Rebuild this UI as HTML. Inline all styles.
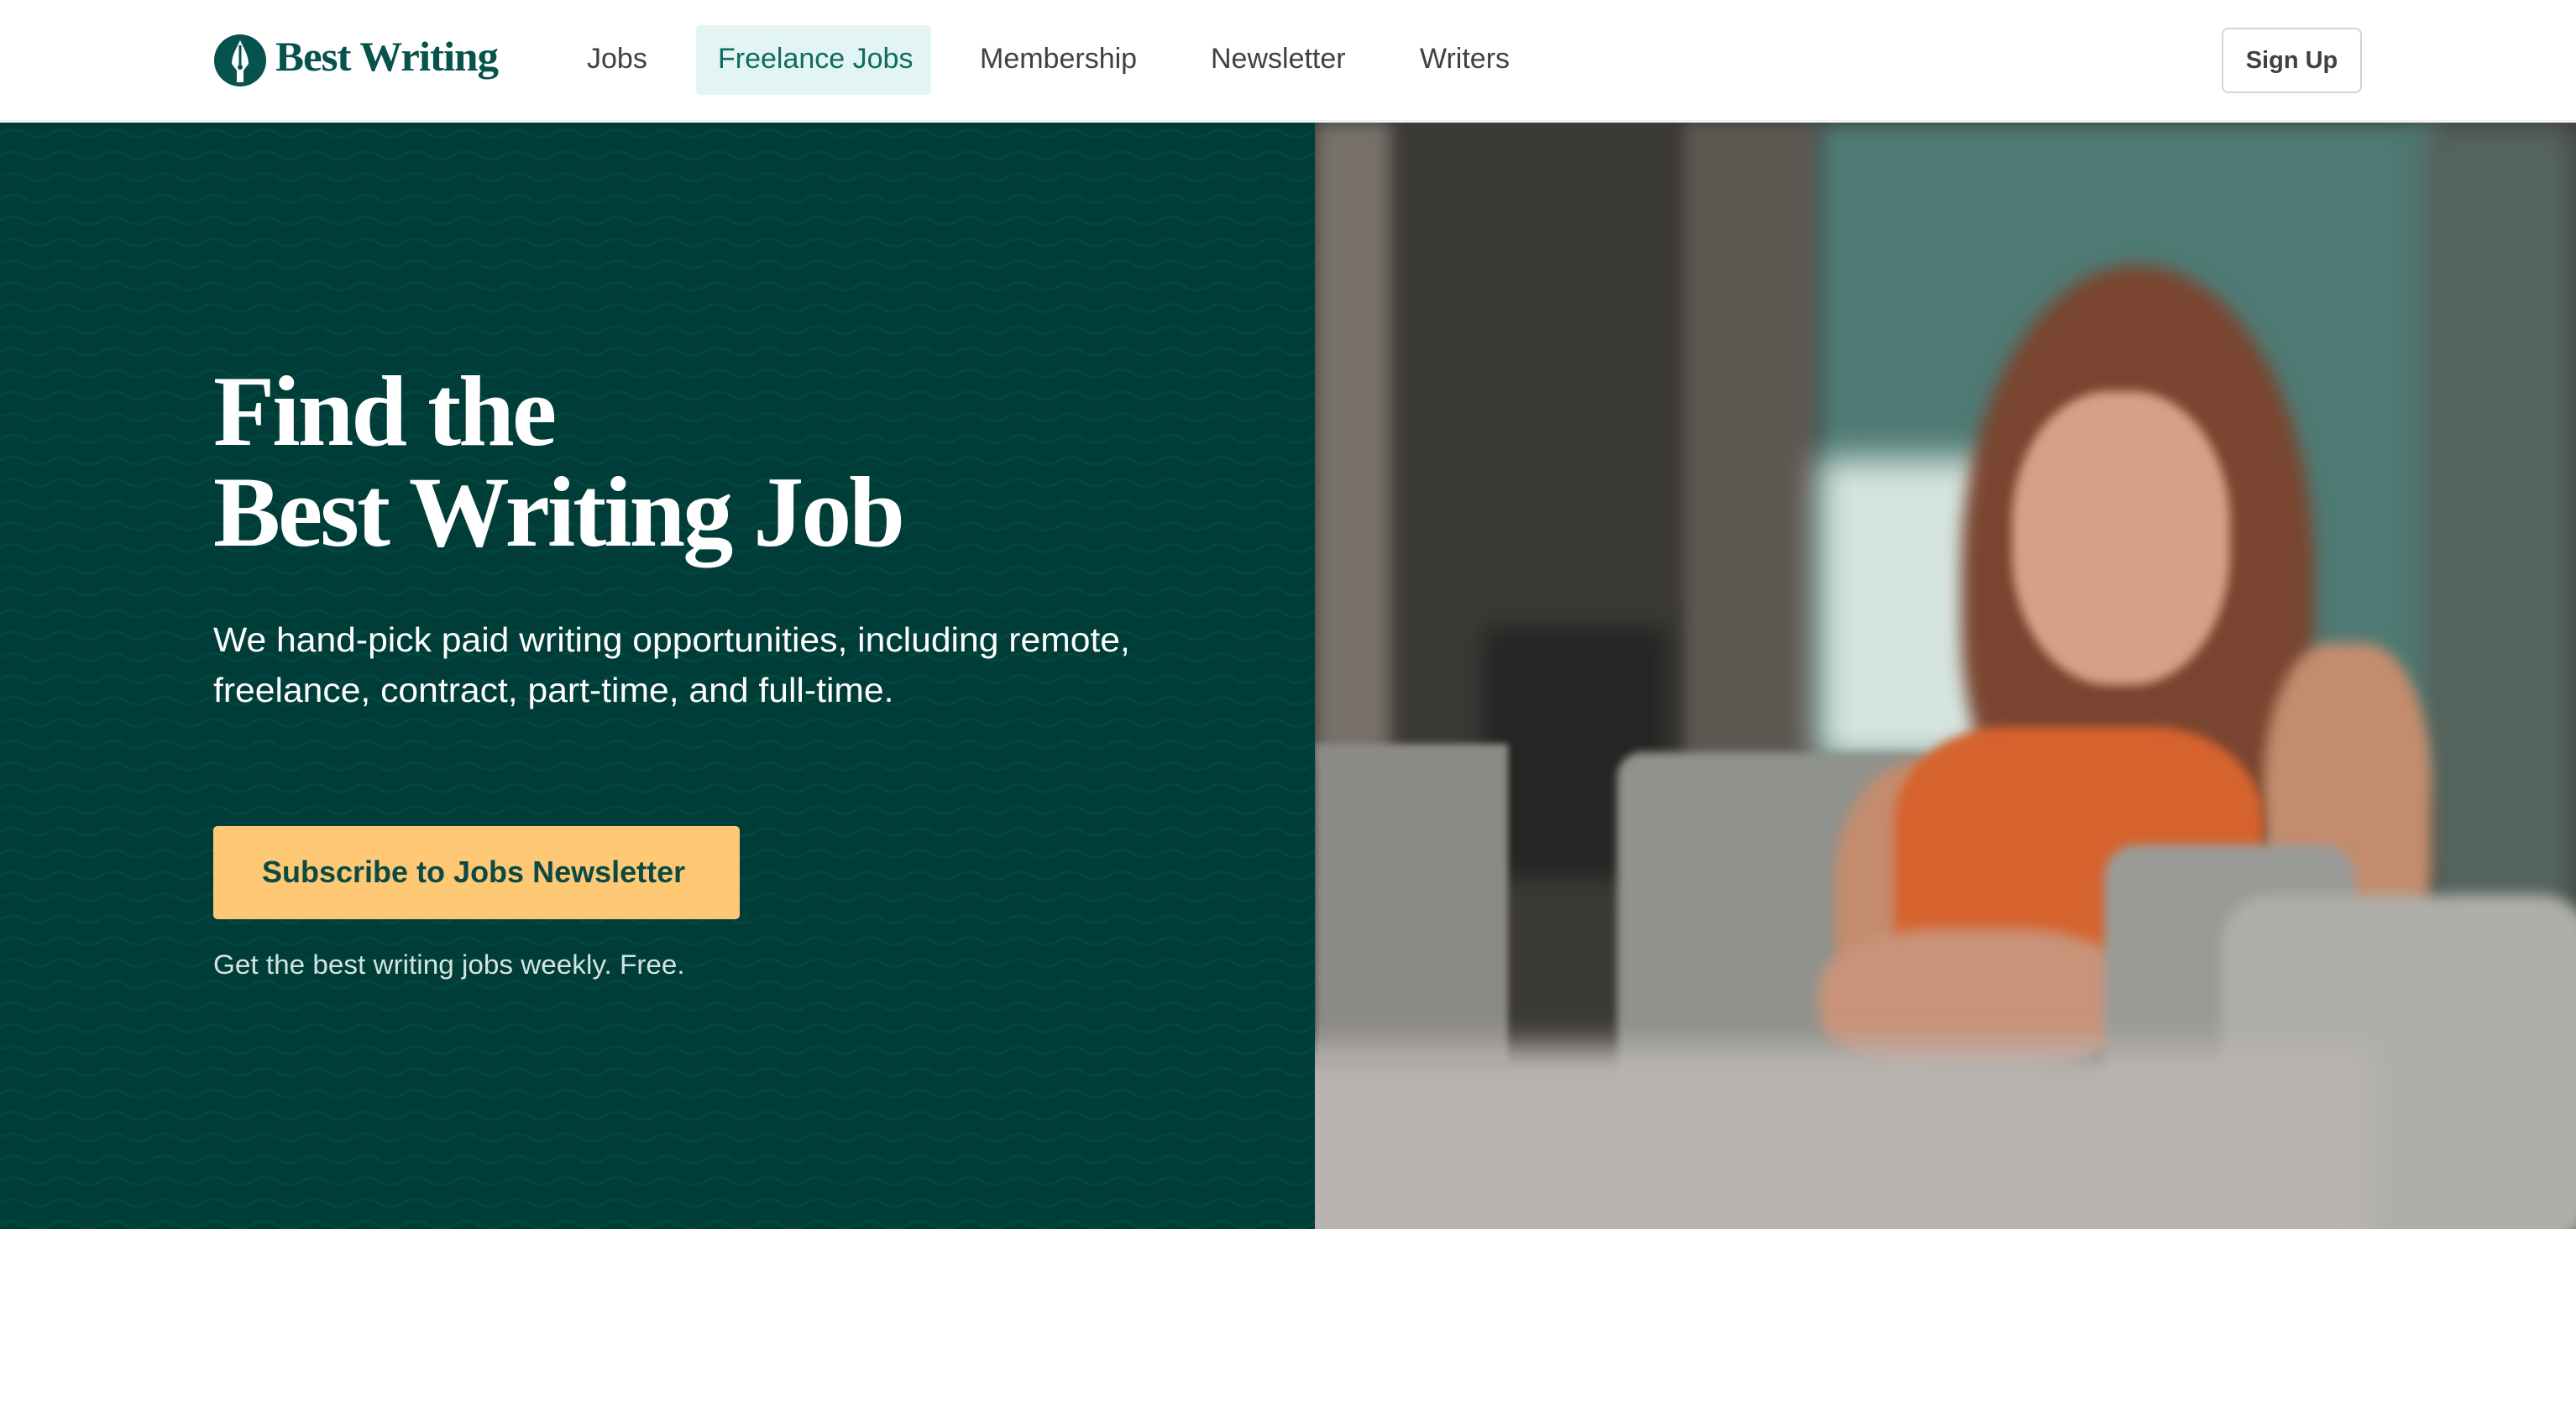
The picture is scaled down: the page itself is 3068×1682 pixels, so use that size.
<!DOCTYPE html>
<html><head><meta charset="utf-8"><style>
*{margin:0;padding:0;box-sizing:border-box}
body{width:3068px;height:1682px;background:#fff;font-family:"Liberation Sans",sans-serif;position:relative;overflow:hidden}
.nav{position:absolute;left:0;top:0;width:3068px;height:145px;background:#fff;border-bottom:2px solid #eef0f2}
.logo{position:absolute;left:254px;top:40px}
.logotext{position:absolute;left:328px;top:38px;font-family:"Liberation Serif",serif;font-weight:bold;font-size:50px;color:#06524c;letter-spacing:-1px;transform:scaleX(1.02);transform-origin:left;white-space:nowrap}
.ni{position:absolute;top:51px;font-size:34px;color:#3f3f46;white-space:nowrap}
.fj{position:absolute;left:829px;top:30px;width:280px;height:83px;background:#e2f4f3;border-radius:6px}
.signup{position:absolute;left:2646px;top:33px;width:167px;height:78px;border:2px solid #d4d4d8;border-radius:8px;font-size:29px;font-weight:bold;color:#3f3f46;text-align:center;line-height:74px}
.hero{position:absolute;left:0;top:146px;width:1566px;height:1318px;background:#003d38;overflow:hidden}
h1{position:absolute;left:254px;font-family:"Liberation Serif",serif;font-weight:bold;font-size:120px;line-height:120px;color:#fff;letter-spacing:-3px;white-space:nowrap}
.p{position:absolute;left:254px;font-size:41px;line-height:60px;color:#fff;white-space:nowrap;transform:scaleX(1.04);transform-origin:left}
.btn{position:absolute;left:254px;width:627px;height:111px;background:#ffc875;border-radius:5px}
.btn span{position:absolute;left:58px;top:34px;font-size:36px;font-weight:bold;color:#0b4a44;white-space:nowrap}
.small{position:absolute;left:254px;font-size:32px;color:#d4e3df;white-space:nowrap;transform:scaleX(1.04);transform-origin:left}
.photo{position:absolute;left:1566px;top:146px;width:1502px;height:1318px;overflow:hidden;background:#3c3a37}
.photo div{position:absolute}
</style></head><body>
<div class="nav">
 <svg class="logo" width="64" height="64" viewBox="0 0 64 64"><circle cx="32" cy="32" r="31" fill="#06524c"/><path d="M32 8 C26 20 22 28 22 36 L28 44 L28 58 L36 58 L36 44 L42 36 C42 28 38 20 32 8Z" fill="#fff"/><path d="M32 14 L32 40" stroke="#06524c" stroke-width="3"/><circle cx="32" cy="40" r="3" fill="#06524c"/></svg>
 <div class="logotext">Best Writing</div>
 <div class="ni" style="left:699px">Jobs</div>
 <div class="fj"></div>
 <div class="ni" style="left:855px;color:#0f6b60">Freelance Jobs</div>
 <div class="ni" style="left:1167px">Membership</div>
 <div class="ni" style="left:1442px">Newsletter</div>
 <div class="ni" style="left:1691px">Writers</div>
 <div class="signup">Sign Up</div>
</div>
<div class="hero">
 <svg width="1566" height="1318" style="position:absolute;left:0;top:0"><defs><pattern id="w" width="60" height="26" patternUnits="userSpaceOnUse"><path d="M0 13 Q15 4 30 13 T60 13" fill="none" stroke="#01463f" stroke-width="3"/></pattern></defs><rect width="1566" height="1318" fill="url(#w)"/></svg>
 <h1 style="top:284px">Find the<br>Best Writing Job</h1>
 <div class="p" style="top:586px">We hand-pick paid writing opportunities, including remote,<br>freelance, contract, part-time, and full-time.</div>
 <div class="btn" style="top:838px"><span>Subscribe to Jobs Newsletter</span></div>
 <div class="small" style="top:985px">Get the best writing jobs weekly. Free.</div>
</div>
<div class="photo">
 <div style="left:0;top:0;width:90px;height:760px;background:#77716a;filter:blur(10px)"></div>
 <div style="left:440px;top:0;width:160px;height:900px;background:#5d5751;filter:blur(8px)"></div>
 <div style="left:600px;top:0;width:740px;height:800px;background:#4f7a74;filter:blur(12px)"></div>
 <div style="left:1320px;top:0;width:182px;height:1318px;background:#56665f;filter:blur(20px)"></div>
 <div style="left:600px;top:400px;width:220px;height:360px;background:#d5e4de;filter:blur(20px)"></div>
 <div style="left:200px;top:600px;width:220px;height:300px;background:#262523;filter:blur(14px)"></div>
 <div style="left:0;top:740px;width:230px;height:380px;background:#8c8a86;filter:blur(4px)"></div>
 <div style="left:360px;top:750px;width:380px;height:400px;background:#8f928d;border-radius:30px;filter:blur(5px)"></div>
 <div style="left:770px;top:170px;width:420px;height:720px;background:#7a4530;border-radius:50% 50% 40% 40%;filter:blur(10px)"></div>
 <div style="left:830px;top:320px;width:260px;height:350px;background:#d6a086;border-radius:45%;filter:blur(6px)"></div>
 <div style="left:1130px;top:620px;width:200px;height:420px;background:#c48c6e;border-radius:40%;filter:blur(8px)"></div>
 <div style="left:620px;top:760px;width:260px;height:340px;background:#c48c6e;border-radius:40%;filter:blur(8px)"></div>
 <div style="left:690px;top:720px;width:440px;height:380px;background:#d6632e;border-radius:30% 30% 10% 10%;filter:blur(6px)"></div>
 <div style="left:600px;top:960px;width:380px;height:170px;background:#c9937a;border-radius:40%;filter:blur(8px)"></div>
 <div style="left:940px;top:860px;width:300px;height:460px;background:#9a9b97;border-radius:40px;filter:blur(6px)"></div>
 <div style="left:1080px;top:920px;width:440px;height:420px;background:#aeaeaa;border-radius:60px;filter:blur(8px)"></div>
 <div style="left:-40px;top:1100px;width:1300px;height:260px;background:#b9b4b0;filter:blur(18px)"></div>
</div>
</body></html>
